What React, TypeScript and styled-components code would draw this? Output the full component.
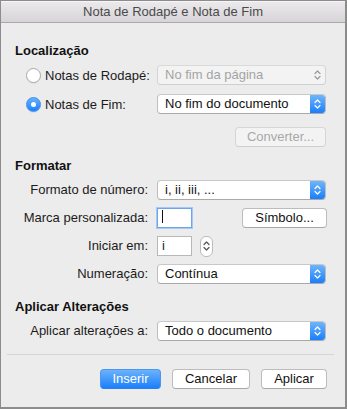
import React from 'react';
import styled, { createGlobalStyle } from 'styled-components';

const Global = createGlobalStyle`
  html, body { margin: 0; padding: 0; background: #ffffff; }
  body { font-family: "Liberation Sans", Arial, sans-serif; font-size: 13px; color: #1b1b1b; }
  * { box-sizing: border-box; }
`;

const Window = styled.div`
  width: 347px;
  height: 409px;
  background: #ececec;
  border-top: 1px solid #8c8c8c;
  border-left: 1px solid #8c8c8c;
  border-right: 2px solid #8c8c8c;
  border-bottom: 2px solid #8c8c8c;
  display: flex;
  flex-direction: column;
  overflow: hidden;
`;

const TitleBar = styled.div`
  height: 22px;
  flex: none;
  display: flex;
  align-items: center;
  justify-content: center;
  background: linear-gradient(#ebe9eb, #d6d4d6);
  border-top: 1px solid #f6f6f6;
  border-bottom: 1px solid #a9a9a9;
  color: #4a4a4a;
  font-size: 13px;
  padding-bottom: 1px;
`;

const Content = styled.div`
  display: flex;
  flex-direction: column;
  padding: 20px 19px 0 14px;
`;

const Heading = styled.div<{ $mt?: number }>`
  font-weight: bold;
  font-size: 13px;
  line-height: 16px;
  height: 16px;
  margin-top: ${p => p.$mt ?? 0}px;
  color: #111;
`;

const Grid = styled.div<{ $mt?: number; $rows: string; $gap?: number }>`
  display: grid;
  grid-template-columns: 133px 169px;
  column-gap: 9px;
  row-gap: ${p => p.$gap ?? 0}px;
  grid-template-rows: ${p => p.$rows};
  margin-top: ${p => p.$mt ?? 0}px;
  align-items: center;
`;

const Label = styled.div`
  text-align: right;
  white-space: nowrap;
  line-height: 20px;
`;

const RadioLabel = styled.label`
  display: flex;
  align-items: center;
  gap: 4px;
  padding-left: 11px;
  white-space: nowrap;
`;

const Radio = styled.span<{ $on?: boolean }>`
  width: 15px;
  height: 15px;
  border-radius: 50%;
  flex: none;
  display: flex;
  align-items: center;
  justify-content: center;
  border: 1px solid ${p => (p.$on ? '#3f8ef0' : '#a9a9a9')};
  background: ${p => (p.$on ? 'linear-gradient(#69b1fa, #1b80fb)' : '#ffffff')};
  box-shadow: 0 1px 0 rgba(0,0,0,0.05);
  &::after {
    content: '';
    width: 5px;
    height: 5px;
    border-radius: 50%;
    background: #fff;
    display: ${p => (p.$on ? 'block' : 'none')};
  }
`;

const Popup = styled.div<{ $disabled?: boolean }>`
  height: 20px;
  display: flex;
  align-items: stretch;
  border: 1px solid ${p => (p.$disabled ? '#d4d4d4' : '#bdbdbd')};
  border-top-color: ${p => (p.$disabled ? '#dadada' : '#c8c8c8')};
  border-bottom-color: ${p => (p.$disabled ? '#cfcfcf' : '#a9a9a9')};
  border-radius: 4px;
  background: ${p => (p.$disabled ? '#f3f3f3' : '#ffffff')};
  color: ${p => (p.$disabled ? '#a4a4a4' : '#111')};
  overflow: hidden;
`;

const PopupText = styled.span`
  flex: 1;
  padding-left: 7px;
  line-height: 18px;
  white-space: nowrap;
`;

const Arrows = styled.span<{ $blue?: boolean }>`
  width: 15px;
  flex: none;
  display: flex;
  align-items: center;
  justify-content: center;
  background: ${p => (p.$blue ? 'linear-gradient(#6fb5fb, #1a7ffb)' : 'transparent')};
  color: ${p => (p.$blue ? '#ffffff' : '#9a9a9a')};
`;

const Chevrons = () => (
  <svg width="7" height="12" viewBox="0 0 7 12" fill="none" stroke="currentColor" strokeWidth="1.2" strokeLinecap="round" strokeLinejoin="round">
    <polyline points="1,4.5 3.5,2 6,4.5" />
    <polyline points="1,7.5 3.5,10 6,7.5" />
  </svg>
);

const Select = ({ value, disabled }: { value: string; disabled?: boolean }) => (
  <Popup $disabled={disabled}>
    <PopupText>{value}</PopupText>
    <Arrows $blue={!disabled}>
      <Chevrons />
    </Arrows>
  </Popup>
);

const Button = styled.button<{ $primary?: boolean; $w: number; $disabled?: boolean }>`
  width: ${p => p.$w}px;
  height: 20px;
  padding: 0;
  font-family: "Liberation Sans", Arial, sans-serif;
  font-size: 13px;
  line-height: 18px;
  border-radius: 4px;
  border: 1px solid ${p => (p.$primary ? '#4a95f5' : p.$disabled ? '#d6d6d6' : '#bcbcbc')};
  border-bottom-color: ${p => (p.$primary ? '#2d7ff0' : p.$disabled ? '#cfcfcf' : '#a8a8a8')};
  background: ${p => (p.$primary ? 'linear-gradient(#6cb3fa, #1b7ffb)' : p.$disabled ? '#f3f3f3' : '#ffffff')};
  color: ${p => (p.$primary ? '#ffffff' : p.$disabled ? '#a8a8a8' : '#111')};
  flex: none;
`;

const Cell = styled.div<{ $justify?: string; $gap?: number }>`
  display: flex;
  align-items: center;
  justify-content: ${p => p.$justify ?? 'flex-start'};
  gap: ${p => p.$gap ?? 0}px;
`;

const ConvertRow = styled.div`
  display: flex;
  justify-content: flex-end;
  margin-top: 13px;
`;

const Field = styled.div<{ $focus?: boolean }>`
  width: 35px;
  height: 20px;
  background: #ffffff;
  border: 1px solid ${p => (p.$focus ? '#6ea4ec' : '#b8b8b8')};
  box-shadow: ${p => (p.$focus ? '0 0 0 1px #a8c8f4' : 'none')};
  padding-left: 4px;
  line-height: 18px;
  display: flex;
  align-items: center;
`;

const Caret = styled.span`
  width: 1px;
  height: 13px;
  background: #111;
  margin-top: -3px;
`;

const Stepper = styled.div`
  width: 13px;
  height: 21px;
  border-radius: 6px;
  border: 1px solid #bcbcbc;
  background: #ffffff;
  display: flex;
  align-items: center;
  justify-content: center;
  color: #555;
`;

const Separator = styled.div`
  height: 1px;
  background: #d5d5d5;
  margin: 13px 11px 0 6px;
`;

const Footer = styled.div`
  display: flex;
  justify-content: flex-end;
  gap: 11px;
  padding: 14px 18px 0 0;
`;

export default function App() {
  return (
    <>
      <Global />
      <Window>
        <TitleBar>Nota de Rodapé e Nota de Fim</TitleBar>
        <Content>
          <Heading>Localização</Heading>
          <Grid $mt={6} $rows="20px 20px" $gap={9}>
            <RadioLabel>
              <Radio />
              Notas de Rodapé:
            </RadioLabel>
            <Select value="No fim da página" disabled />
            <RadioLabel>
              <Radio $on />
              Notas de Fim:
            </RadioLabel>
            <Select value="No fim do documento" />
          </Grid>
          <ConvertRow>
            <Button $w={91} $disabled>Converter...</Button>
          </ConvertRow>

          <Heading $mt={11}>Formatar</Heading>
          <Grid $mt={6} $rows="20px 20px 20px 20px" $gap={8}>
            <Label>Formato de número:</Label>
            <Select value="i, ii, iii, ..." />
            <Label>Marca personalizada:</Label>
            <Cell $justify="space-between">
              <Field $focus>
                <Caret />
              </Field>
              <Button $w={85} style={{ marginRight: '-1px' }}>Símbolo...</Button>
            </Cell>
            <Label>Iniciar em:</Label>
            <Cell $gap={8}>
              <Field>i</Field>
              <Stepper>
                <Chevrons />
              </Stepper>
            </Cell>
            <Label>Numeração:</Label>
            <Select value="Contínua" />
          </Grid>

          <Heading $mt={15}>Aplicar Alterações</Heading>
          <Grid $mt={6} $rows="20px">
            <Label>Aplicar alterações a:</Label>
            <Select value="Todo o documento" />
          </Grid>
        </Content>
        <Separator />
        <Footer>
          <Button $w={61} $primary>Inserir</Button>
          <Button $w={78}>Cancelar</Button>
          <Button $w={66}>Aplicar</Button>
        </Footer>
      </Window>
    </>
  );
}
